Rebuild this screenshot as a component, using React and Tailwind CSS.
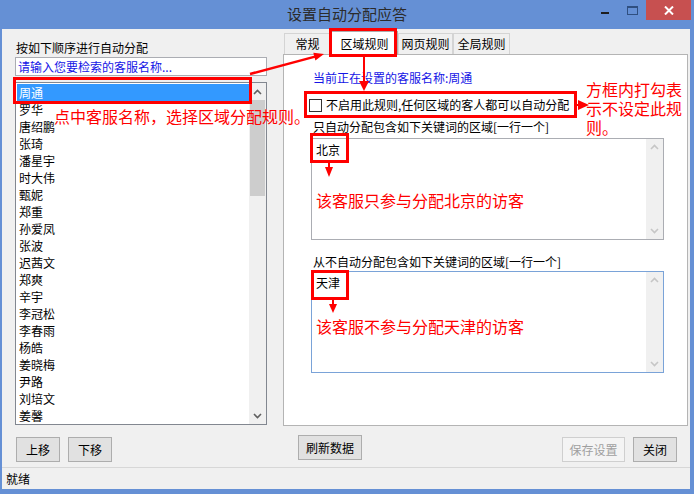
import React from 'react';

const staff = [
  '周通', '罗华', '唐绍鹏', '张琦', '潘星宇', '时大伟', '甄妮', '郑重', '孙爱凤', '张波',
  '迟茜文', '郑爽', '辛宇', '李冠松', '李春雨', '杨皓', '姜晓梅', '尹路', '刘培文', '姜馨',
];

function Chevron({ up, color }) {
  return (
    <svg width="9" height="6" viewBox="0 0 9 6">
      <path d={up ? 'M1 5 L4.5 1.5 L8 5' : 'M1 1 L4.5 4.5 L8 1'} fill="none" stroke={color} strokeWidth="1.6" />
    </svg>
  );
}

// textarea with an idle vertical scrollbar
function KeywordBox({ value, focused }) {
  return (
    <div className={`mt-[1px] w-[353px] h-[102px] bg-white border flex ${focused ? 'border-[#7aa3d8]' : 'border-[#abadb3]'}`}>
      <div className="flex-1 pl-[4px] pt-[3px] leading-[16px]">{value}</div>
      <div className="w-[17px] bg-[#f0f0f0] flex flex-col justify-between items-center py-[5px]">
        <Chevron up color="#c6c6c6" />
        <Chevron color="#c6c6c6" />
      </div>
    </div>
  );
}

function Tab({ label, active, width }) {
  if (active) {
    return (
      <div className={`${width} h-[24px] -mb-[1px] bg-white border border-b-0 border-[#adadad] flex items-center justify-center`}>
        {label}
      </div>
    );
  }
  return (
    <div className={`${width} h-[21px] bg-[#f0f0f0] border border-b-0 border-[#d4d4d4] flex items-center justify-center`}>
      {label}
    </div>
  );
}

export default function App() {
  return (
    <div className="relative w-[694px] h-[494px] bg-[#6590d5] flex flex-col overflow-hidden text-[12px] text-black font-['Noto_Sans_CJK_SC',sans-serif]">
      {/* Title bar */}
      <div className="relative h-[29px] flex items-center justify-center">
        <span className="text-[15px] text-[#2b2b2b]">设置自动分配应答</span>
        <div className="absolute top-0 right-[3px] flex items-start">
          <div className="mt-[12px] w-[8px] h-[2px] bg-[#1e1e1e]" />
          <div className="ml-[18px] mt-[6px] w-[11px] h-[9px] border border-t-2 border-[#2f4f80]" />
          <div className="ml-[8px] w-[45px] h-[20px] bg-[#c75050] flex items-center justify-center">
            <svg width="10" height="9" viewBox="0 0 10 9">
              <path d="M1 0.5 L9 8.5 M9 0.5 L1 8.5" stroke="#fff" strokeWidth="2" />
            </svg>
          </div>
        </div>
      </div>

      {/* Client area */}
      <div className="ml-[2px] mr-[4px] h-[460px] bg-[#f0f0f0] flex flex-col">
        <div className="h-[438px] flex">
          {/* Left column */}
          <div className="ml-[13px] w-[252px] pt-[11px] flex flex-col">
            <div className="h-[16px] leading-[16px] pl-[1px]">按如下顺序进行自动分配</div>
            <div className="mt-[1px] h-[19px] border border-[#abadb3] bg-white pl-[2px] leading-[17px] text-[#1515e6]">
              请输入您要检索的客服名称...
            </div>
            <div className="mt-[6px] h-[343px] border border-[#828790] bg-white flex">
              <div className="flex-1 pt-[1px] pl-[1px]">
                {staff.map((name, i) => (
                  <div key={name} className={`h-[17px] leading-[17px] pl-[2px] ${i === 0 ? 'bg-[#3399ff] text-white' : ''}`}>
                    {name}
                  </div>
                ))}
              </div>
              <div className="w-[17px] bg-[#f0f0f0] flex flex-col">
                <div className="h-[17px] flex items-center justify-center">
                  <Chevron up color="#606060" />
                </div>
                <div className="mx-[1px] h-[96px] bg-[#cdcdcd]" />
                <div className="flex-1" />
                <div className="h-[17px] flex items-center justify-center">
                  <Chevron color="#606060" />
                </div>
              </div>
            </div>
            <div className="mt-[12px] ml-[1px] flex gap-[8px]">
              <button className="w-[44px] h-[25px] bg-[#e1e1e1] border border-[#adadad]">上移</button>
              <button className="w-[44px] h-[25px] bg-[#e1e1e1] border border-[#adadad]">下移</button>
            </div>
          </div>

          {/* Right column */}
          <div className="ml-[16px] w-[405px] pt-[2px] flex flex-col">
            <div className="relative z-10 h-[23px] pl-[1px] flex items-end">
              <Tab label="常规" width="w-[47px]" />
              <Tab label="区域规则" width="w-[67px]" active />
              <Tab label="网页规则" width="w-[55px]" />
              <Tab label="全局规则" width="w-[57px]" />
            </div>
            <div className="h-[372px] bg-white border border-[#b4b4b4] pl-[27px] pt-[15px] flex flex-col">
              <div className="h-[16px] leading-[16px] pl-[2px] text-[#1515e6]">当前正在设置的客服名称:周通</div>
              <div className="mt-[11px] h-[16px] flex items-center">
                <div className="-ml-[2px] w-[13px] h-[13px] border border-[#333] bg-white" />
                <span className="ml-[4px] leading-[16px]">不启用此规则,任何区域的客人都可以自动分配</span>
              </div>
              <div className="mt-[6px] h-[16px] leading-[16px] pl-[2px]">只自动分配包含如下关键词的区域[一行一个]</div>
              <div className="mt-[2px]">
                <KeywordBox value="北京" />
              </div>
              <div className="mt-[14px] h-[16px] leading-[16px] pl-[2px]">从不自动分配包含如下关键词的区域[一行一个]</div>
              <KeywordBox value="天津" focused />
            </div>
            <div className="mt-[9px] flex items-start">
              <button className="ml-[15px] w-[64px] h-[25px] bg-[#e1e1e1] border border-[#adadad]">刷新数据</button>
              <div className="flex-1" />
              <button className="mt-[2px] w-[63px] h-[25px] bg-[#f4f4f4] border border-[#cfcfcf] text-[#a0a0a0]">保存设置</button>
              <button className="mt-[2px] ml-[8px] mr-[11px] w-[44px] h-[25px] bg-[#e1e1e1] border border-[#adadad]">关闭</button>
            </div>
          </div>
        </div>

        {/* Status bar */}
        <div className="h-[22px] border-t border-[#d7d7d7] flex items-center pl-[4px]">就绪</div>
      </div>

      {/* Red annotations */}
      <div className="absolute left-[13px] top-[77px] w-[239px] h-[27px] border-[3px] border-[#ff0000]" />
      <div className="absolute left-[329px] top-[28px] w-[68px] h-[29px] border-[3px] border-[#ff0000] z-20" />
      <div className="absolute left-[304px] top-[91px] w-[273px] h-[27px] border-[3px] border-[#ff0000]" />
      <div className="absolute left-[310px] top-[133px] w-[39px] h-[30px] border-[3px] border-[#ff0000]" />
      <div className="absolute left-[311px] top-[270px] w-[38px] h-[30px] border-[3px] border-[#ff0000]" />

      <div className="absolute left-[54px] top-[106px] leading-[20px] text-[16px] text-[#ff0000]">点中客服名称，选择区域分配规则。</div>
      <div className="absolute left-[586px] top-[80px] leading-[19px] text-[16px] text-[#ff0000] whitespace-nowrap">
        方框内打勾表<br />示不设定此规<br />则。
      </div>
      <div className="absolute left-[316px] top-[190px] leading-[20px] text-[16px] text-[#ff0000]">该客服只参与分配北京的访客</div>
      <div className="absolute left-[316px] top-[316px] leading-[20px] text-[16px] text-[#ff0000]">该客服不参与分配天津的访客</div>

      <svg className="absolute left-0 top-0 pointer-events-none z-30" width="694" height="494" viewBox="0 0 694 494">
        <line x1="250" y1="74" x2="315" y2="56.6" stroke="#ff0000" strokeWidth="2.5" />
        <polygon points="324,54 315.4,60.5 313.3,52.7" fill="#ff0000" />
        <line x1="364" y1="56" x2="364" y2="82" stroke="#ff0000" strokeWidth="2" />
        <polygon points="359,81 369,81 364,91" fill="#ff0000" />
        <line x1="577" y1="105" x2="580" y2="105" stroke="#ff0000" strokeWidth="2" />
        <polygon points="578,100 589,105 578,110" fill="#ff0000" />
        <line x1="329" y1="163" x2="329" y2="168" stroke="#ff0000" strokeWidth="2" />
        <polygon points="325,167 333,167 329,177" fill="#ff0000" />
        <line x1="333" y1="300" x2="333" y2="305" stroke="#ff0000" strokeWidth="2" />
        <polygon points="329,304 337,304 333,313" fill="#ff0000" />
      </svg>
    </div>
  );
}
